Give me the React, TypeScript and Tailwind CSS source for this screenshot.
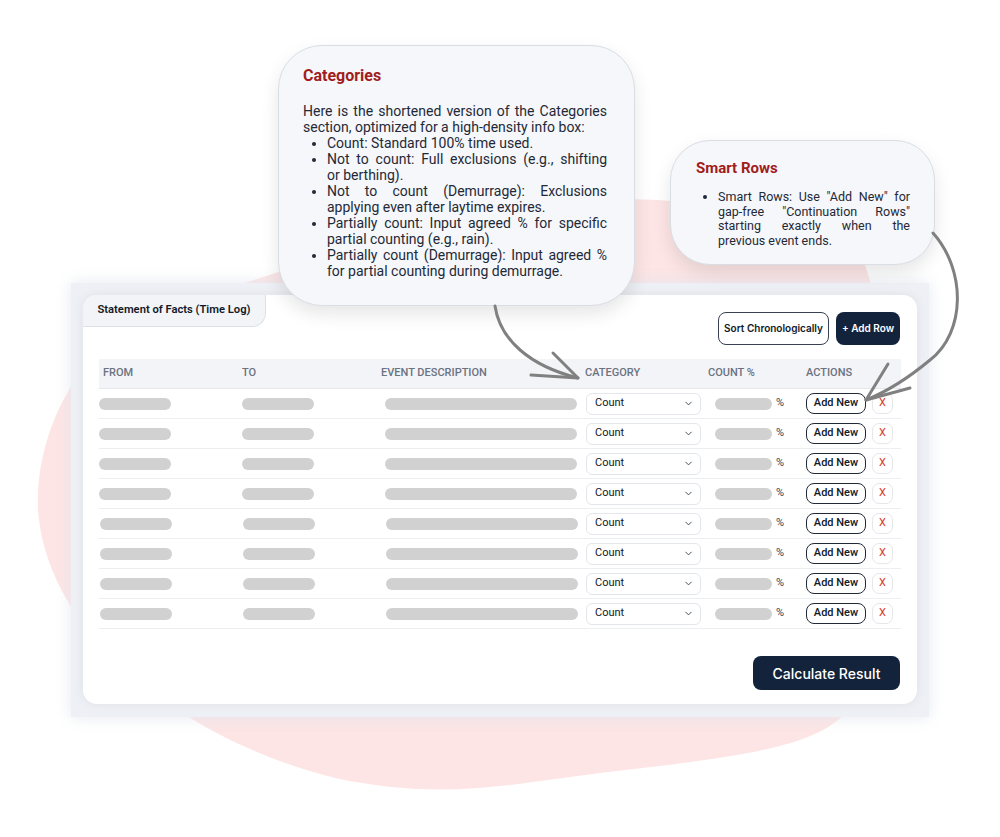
import { ChevronDown } from 'lucide-react'

const rows = [0, 1, 2, 3, 4, 5, 6, 7]

const categoryItems = [
  'Count: Standard 100% time used.',
  'Not to count: Full exclusions (e.g., shifting or\u00a0berthing).',
  'Not to count (Demurrage): Exclusions applying even after laytime expires.',
  'Partially count: Input agreed % for specific partial counting (e.g., rain).',
  'Partially count (Demurrage): Input agreed % for partial counting during demurrage.',
]

function Bar({ className }: { className: string }) {
  return <div className={`h-[12px] rounded-full bg-[#d1d1d1] ${className}`} />
}

function Row({ shift }: { shift: boolean }) {
  return (
    <div className="grid h-[30px] grid-cols-[139px_143px_204px_123px_98px_93px] items-center border-b border-[#eceef1]">
      <Bar className={`w-[72px] ${shift ? 'ml-[1px]' : ''}`} />
      <Bar className={`w-[72px] ${shift ? 'ml-[5px]' : 'ml-[4px]'}`} />
      <Bar className={`w-[192px] ${shift ? 'ml-[5px]' : 'ml-[4px]'}`} />
      <div className="ml-[1px] flex h-[22px] w-[115px] items-center justify-between rounded-[6px] border border-[#e3e6ea] bg-white pl-[8px] pr-[6px] text-[11px] text-[#111827]">
        <span>Count</span>
        <ChevronDown size={11} strokeWidth={2} className="text-[#374151]" />
      </div>
      <div className="flex items-center">
        <Bar className="ml-[7px] w-[57px]" />
        <span className="ml-[4px] text-[11px] text-[#374151]">%</span>
      </div>
      <div className="flex items-center gap-[6px]">
        <button className="h-[21px] w-[60px] rounded-[8px] border border-[#1f2937] bg-white text-[11px] font-medium text-[#111827]">
          Add New
        </button>
        <button className="h-[21px] w-[21px] rounded-[7px] border border-[#e5e7eb] bg-white text-[11px] text-[#d63a2c]">
          X
        </button>
      </div>
    </div>
  )
}

export default function App() {
  return (
    <div className="relative h-[837px] w-[1000px] overflow-hidden bg-white font-['Roboto','Liberation_Sans',sans-serif]">
      {/* pink blob */}
      <svg className="absolute inset-0" width="1000" height="837" viewBox="0 0 1000 837">
        <path
          d="M 285 270 C 420 190 700 175 850 238 C 905 300 885 600 862 690 C 835 742 785 752 600 773 C 500 786 440 800 335 778 C 200 745 48 645 38 510 C 36 465 50 420 72 385 C 110 330 190 300 285 270 Z"
          fill="#fde5e5"
        />
      </svg>

      {/* outer panel */}
      <div className="relative ml-[71px] mt-[283px] h-[434px] w-[858px] bg-[#eef0f5] p-[12px] shadow-[0_0_14px_rgba(226,230,238,0.9)]">
        <div className="flex h-[409px] flex-col rounded-[14px] bg-white shadow-[0_0_10px_rgba(210,214,224,0.6)]">
          <div className="flex items-start justify-between">
            <div className="flex h-[32px] w-[183px] items-center justify-center rounded-tl-[14px] rounded-br-[14px] border-b border-r border-[#dde1e6] bg-[#f2f4f7] text-[11.2px] font-semibold text-[#111827]">
              Statement of Facts (Time Log)
            </div>
            <div className="mr-[17px] mt-[17px] flex gap-[7px] font-['Inter',sans-serif]">
              <button className="h-[33px] w-[111px] rounded-[8px] border border-[#374151] bg-white text-[10px] font-semibold text-[#111827]">
                Sort Chronologically
              </button>
              <button className="h-[33px] w-[64px] rounded-[8px] bg-[#14233c] text-[10px] font-semibold text-white">
                + Add Row
              </button>
            </div>
          </div>

          <div className="mx-[16px] mt-[14px]">
            <div className="grid h-[30px] grid-cols-[139px_143px_204px_123px_98px_93px] items-center border-b border-[#e5e7eb] bg-[#f3f4f8] text-[11px] font-medium text-[#6b7280]">
              <span className="pl-[4px]">FROM</span>
              <span className="pl-[4px]">TO</span>
              <span>EVENT DESCRIPTION</span>
              <span>CATEGORY</span>
              <span>COUNT %</span>
              <span>ACTIONS</span>
            </div>
            {rows.map((r) => (
              <Row key={r} shift={r >= 4} />
            ))}
          </div>

          <div className="mr-[17px] mt-[27px] flex justify-end">
            <button className="h-[34px] w-[147px] rounded-[8px] bg-[#13233b] font-['Inter',sans-serif] text-[14px] font-medium text-white">
              Calculate Result
            </button>
          </div>
        </div>
      </div>

      {/* Categories callout */}
      <div className="absolute left-[278px] top-[45px] h-[261px] w-[357px] rounded-[44px] border border-[#d9dee4] bg-[#f5f7fa] pl-[24px] pr-[27px] pt-[20px] shadow-[0_8px_18px_rgba(0,0,0,0.1)]">
        <div className="text-[16px] font-bold leading-[20px] text-[#a11d1d]">Categories</div>
        <div className="mt-[17px] text-justify text-[14px] leading-[16px] text-[#1f2937]">
          <p>Here is the shortened version of the Categories section, optimized for a high-density info box:</p>
          <ul className="list-disc pl-[24px]">
            {categoryItems.map((t) => (
              <li key={t}>{t}</li>
            ))}
          </ul>
        </div>
      </div>

      {/* Smart Rows callout */}
      <div className="absolute left-[670px] top-[140px] h-[125px] w-[265px] rounded-[40px] border border-[#d9dee4] bg-[#f5f7fa] pl-[25px] pr-[24px] pt-[18px] shadow-[0_8px_18px_rgba(0,0,0,0.1)]">
        <div className="text-[15px] font-bold leading-[18px] text-[#a11d1d]">Smart Rows</div>
        <ul className="mt-[13px] list-disc pl-[22px] text-justify text-[12.5px] leading-[14.5px] text-[#1f2937]">
          <li>
            Smart Rows: Use "Add New" for gap-free "Continuation Rows" starting exactly when the{' '}
            <span className="whitespace-nowrap">previous event ends.</span>
          </li>
        </ul>
      </div>

      {/* arrows */}
      <svg className="pointer-events-none absolute inset-0" width="1000" height="837" viewBox="0 0 1000 837" fill="none">
        <g stroke="#808080" strokeWidth="3" strokeLinecap="round" strokeLinejoin="round">
          <path d="M 495 306 C 500 340 530 366 578 378" />
          <path d="M 553 353 L 578 378 L 531 375" />
          <path d="M 933 233 C 966 270 966 332 930 360 C 906 380 886 392 866 400" />
          <path d="M 888 364 L 866 400 L 910 388" />
        </g>
      </svg>
    </div>
  )
}
